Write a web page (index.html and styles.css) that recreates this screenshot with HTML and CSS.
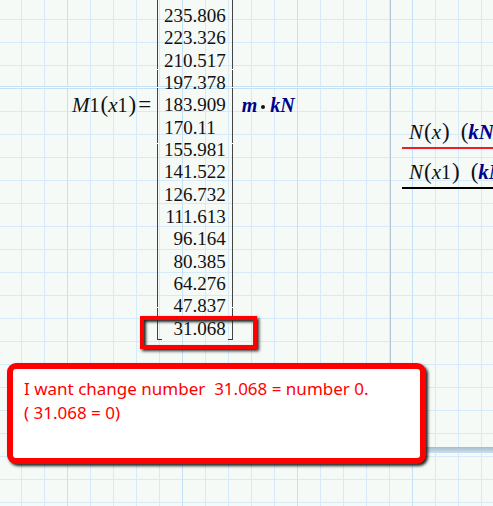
FILE: index.html
```html
<!DOCTYPE html>
<html lang="en">
<head>
	<meta charset="UTF-8">
	<meta name="viewport" content="width=device-width, initial-scale=1.0">
	<title>Worksheet</title>
	<link rel="stylesheet" href="styles.css">
</head>
<body>
	<main class="sheet">
		<div class="page-line"></div>
		<section class="formula">
			<div class="name"><var>M</var>1<span class="paren">(</span><var>x</var>1<span class="paren">)</span><span class="equals">=</span></div>
			<div class="matrix">
				<table class="values">
					<tr><td>235.806</td></tr>
					<tr><td>223.326</td></tr>
					<tr><td>210.517</td></tr>
					<tr><td>197.378</td></tr>
					<tr><td>183.909</td></tr>
					<tr><td class="short">170.11</td></tr>
					<tr><td>155.981</td></tr>
					<tr><td>141.522</td></tr>
					<tr><td>126.732</td></tr>
					<tr><td>111.613</td></tr>
					<tr><td>96.164</td></tr>
					<tr><td>80.385</td></tr>
					<tr><td>64.276</td></tr>
					<tr><td>47.837</td></tr>
					<tr><td>31.068</td></tr>
				</table>
				<div class="highlight"></div>
			</div>
			<div class="unit"><var>m</var><span class="dot"></span><var>kN</var></div>
		</section>
		<section class="plot">
			<ul class="legend">
				<li class="red"><var>N</var><span class="paren">(</span><var>x</var><span class="paren">)</span> <span class="paren wide">(</span><var class="kn">kN</var></li>
				<li class="black"><var>N</var><span class="paren">(</span><var>x</var>1<span class="paren">)</span> <span class="paren wide">(</span><var class="kn">kN</var></li>
			</ul>
		</section>
		<aside class="note">
			<p>I want change number  31.068 = number 0.</p>
			<p>( 31.068 = 0)</p>
		</aside>
	</main>
</body>
</html>
```
FILE: styles.css
```css
* {
	margin: 0;
	padding: 0;
	box-sizing: border-box;
}
body {
	font-family: "Liberation Serif", "Times New Roman", serif;
	font-size: 19px;
	color: #111;
	background-color: #f5faf7;
	/* every fifth vertical line is stronger */
	background-image:
		linear-gradient(to right, #c4e1f8 1px, transparent 1px),
		linear-gradient(to right, #d6eaf9 1px, transparent 1px),
		linear-gradient(to bottom, #d6eaf9 1px, transparent 1px);
	background-size: 115px 115px, 23px 23px, 23px 23px;
	background-position: 67px 0, 21px 0, 0 19px;
}
.sheet {
	position: relative;
	z-index: 0;
	display: flex;
	align-items: stretch;
	min-height: 100vh;
	overflow: hidden;
}

/* formula */
.formula {
	flex: 0 0 390px;
	display: flex;
	align-items: flex-start;
	padding-left: 72px;
}
.name, .unit {
	display: flex;
	align-items: center;
	height: 24px;
	margin-top: 93px;
	white-space: nowrap;
}
.name {
	flex: 0 0 85px;
}
.name, .legend {
	font-size: 20px;
}
.name var, .legend var {
	font-size: 21px;
	line-height: 20px;
}
.paren {
	font-size: 23px;
	line-height: 20px;
}
.name .paren, .legend .paren {
	padding-left: 1px;
}
.equals {
	margin-left: 2px;
	font-size: 23px;
	line-height: 20px;
}
.matrix {
	position: relative;
	padding: 5px 6px 0 6px;
	border: solid #444;
	border-width: 0 1px;
	/* small gaps where the bracket pieces meet */
	border-image: linear-gradient(#444 70px, #fff 70px, #fff 71px, #444 71px, #444 87px, #fff 87px, #fff 88px, #444 88px, #444 143px, #fff 143px, #fff 144px, #444 144px, #444 306px, #fff 306px, #fff 307px, #444 307px) 1;
}
/* feet of the brackets */
.matrix::before, .matrix::after {
	content: "";
	position: absolute;
	bottom: 0;
	width: 4px;
	height: 1px;
	background-color: #333;
}
.matrix::before {
	left: 0;
}
.matrix::after {
	right: 0;
}
.values {
	height: 335px;
	border-collapse: collapse;
}
.values td {
	line-height: 22px;
	text-align: right;
}
.values .short {
	padding-right: 10px;
}
.highlight {
	position: absolute;
	left: -18px;
	right: -25px;
	bottom: -9px;
	height: 33px;
	border: 4px solid #f00;
	box-shadow: 2px 2px 3px #222, inset 2px 2px 3px #222;
}
.unit {
	margin-left: 9px;
	font-size: 20px;
	font-weight: bold;
	color: #00008b;
}
.dot {
	width: 4px;
	height: 4px;
	margin: 3px 5px 0 4px;
	border-radius: 50%;
	background-color: #111;
}

/* plot */
.plot {
	flex: 1;
	min-width: 0;
	height: 453px;
	padding: 117px 0 0 11px;
	border-left: 1px solid #b4c6d8;
	background: linear-gradient(#a4bbd0, #cfe0ee) bottom / 100% 6px no-repeat;
	overflow: hidden;
}
.legend {
	list-style: none;
	white-space: nowrap;
}
.legend li {
	height: 32px;
	padding-left: 7px;
	line-height: 30px;
	border-bottom: 2px solid #f01c2c;
}
.legend .black {
	margin-top: 8px;
	border-color: #000;
}
.wide {
	margin-left: 5px;
}
.kn {
	font-weight: bold;
	color: #00008b;
}

.page-line {
	position: absolute;
	z-index: -1;
	top: 86px;
	left: 0;
	right: 0;
	height: 3px;
	border: 1px solid #c4e1f4;
	border-width: 1px 0;
	background-color: #fff;
}

/* note */
.note {
	position: absolute;
	top: 363px;
	left: 7px;
	width: 419px;
	height: 101px;
	padding: 8px 11px;
	border: 6px solid #f00;
	border-radius: 9px;
	background-color: #fff;
	box-shadow: 2px 2px 3px #222;
	font-family: "Noto Sans", sans-serif;
	font-size: 17px;
	line-height: 24px;
	color: #f00;
}
.note p {
	white-space: pre-wrap;
}
```
